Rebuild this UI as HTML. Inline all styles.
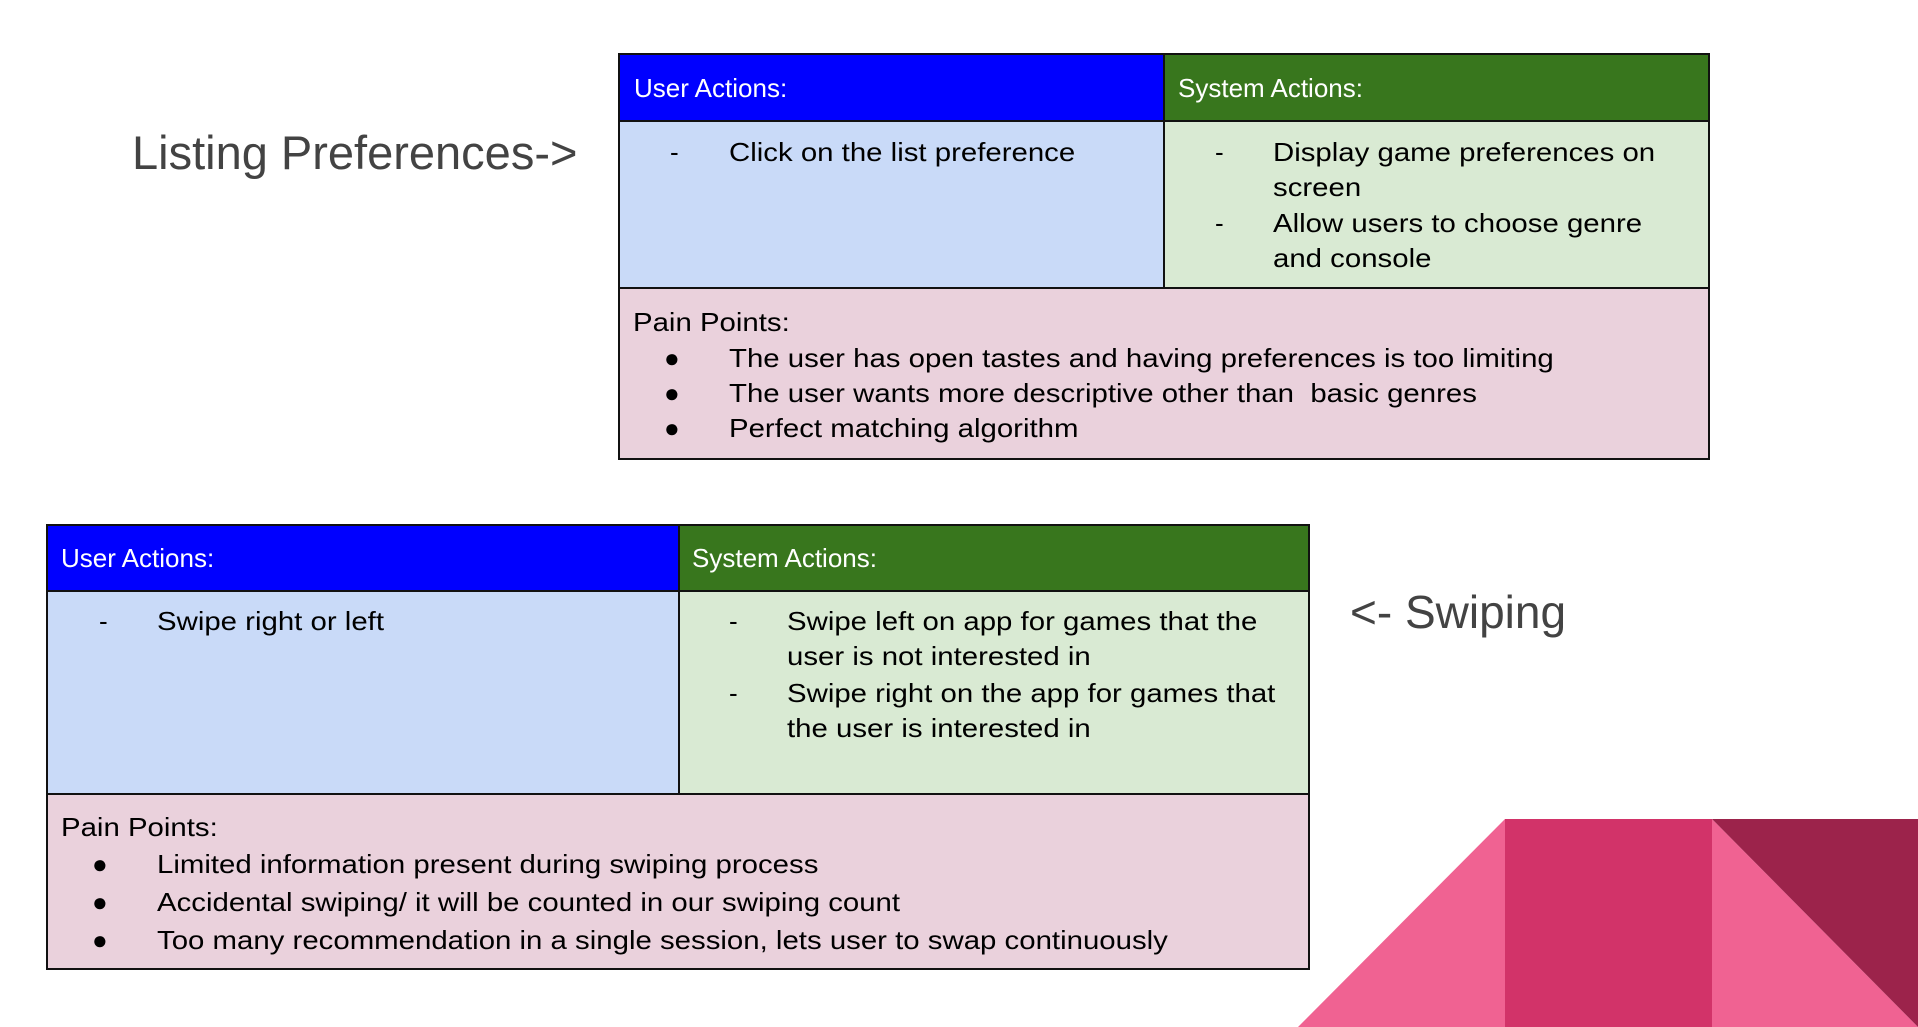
<!DOCTYPE html>
<html><head><meta charset="utf-8"><style>
body{margin:0;width:1918px;height:1027px;background:#fff;position:relative;overflow:hidden;font-family:"Liberation Sans",Arial,sans-serif;}
.a{position:absolute;box-sizing:border-box;}
.c{border:2px solid #111;}
.t{position:absolute;font-size:26px;color:#000;white-space:nowrap;line-height:35px;}
.s{transform:scaleX(1.13);transform-origin:0 0;}
.w{color:#fff}
</style></head><body>
<div class="a" style="left:132px;top:125px;font-size:47px;color:#434343;">Listing Preferences-&gt;</div>
<div class="a" style="left:1350px;top:585px;font-size:46px;color:#434343;">&lt;- Swiping</div>

<!-- top table -->
<div class="a c" style="left:618px;top:53px;width:547px;height:69px;background:#0000ff"></div>
<div class="a c" style="left:1163px;top:53px;width:547px;height:69px;background:#38761d"></div>
<div class="a c" style="left:618px;top:120px;width:547px;height:169px;background:#c9daf8"></div>
<div class="a c" style="left:1163px;top:120px;width:547px;height:169px;background:#d9ead3"></div>
<div class="a c" style="left:618px;top:287px;width:1092px;height:173px;background:#ead1dc"></div>
<div class="t w" style="left:634px;top:71px">User Actions:</div>
<div class="t w" style="left:1178px;top:71px">System Actions:</div>
<div class="t" style="left:670px;top:135px">-</div>
<div class="t s" style="left:729px;top:135px">Click on the list preference</div>
<div class="t" style="left:1215px;top:135px">-</div>
<div class="t s" style="left:1273px;top:135px">Display game preferences on<br>screen</div>
<div class="t" style="left:1215px;top:206px">-</div>
<div class="t s" style="left:1273px;top:206px">Allow users to choose genre<br>and console</div>
<div class="t s" style="left:633px;top:305px">Pain Points:</div>
<div class="t" style="left:664px;top:341px">●<br>●<br>●</div>
<div class="t s" style="left:729px;top:341px">The user has open tastes and having preferences is too limiting<br>The user wants more descriptive other than&nbsp; basic genres<br>Perfect matching algorithm</div>

<!-- bottom table -->
<div class="a c" style="left:46px;top:524px;width:634px;height:68px;background:#0000ff"></div>
<div class="a c" style="left:678px;top:524px;width:632px;height:68px;background:#38761d"></div>
<div class="a c" style="left:46px;top:590px;width:634px;height:205px;background:#c9daf8"></div>
<div class="a c" style="left:678px;top:590px;width:632px;height:205px;background:#d9ead3"></div>
<div class="a c" style="left:46px;top:793px;width:1264px;height:177px;background:#ead1dc"></div>
<div class="t w" style="left:61px;top:541px">User Actions:</div>
<div class="t w" style="left:692px;top:541px">System Actions:</div>
<div class="t" style="left:99px;top:604px">-</div>
<div class="t s" style="left:157px;top:604px">Swipe right or left</div>
<div class="t" style="left:729px;top:604px">-</div>
<div class="t s" style="left:787px;top:604px">Swipe left on app for games that the<br>user is not interested in</div>
<div class="t" style="left:729px;top:676px">-</div>
<div class="t s" style="left:787px;top:676px">Swipe right on the app for games that<br>the user is interested in</div>
<div class="t s" style="left:61px;top:810px">Pain Points:</div>
<div class="t" style="left:92px;top:845px;line-height:38px">●<br>●<br>●</div>
<div class="t s" style="left:157px;top:845px;line-height:38px">Limited information present during swiping process<br>Accidental swiping/ it will be counted in our swiping count<br>Too many recommendation in a single session, lets user to swap continuously</div>

<svg class="a" style="left:0;top:0" width="1918" height="1027">
<polygon points="1298,1027 1505,819 1505,1027" fill="#f06292"/>
<rect x="1505" y="819" width="207" height="208" fill="#d23369"/>
<polygon points="1712,819 1918,1027 1712,1027" fill="#f06292"/>
<polygon points="1712,819 1918,819 1918,1027" fill="#9c234b"/>
</svg>
</body></html>
